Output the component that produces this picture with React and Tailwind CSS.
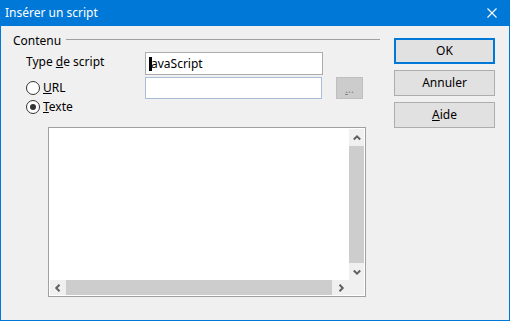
import * as React from "react";

function Radio({ checked }) {
  return (
    <span className="w-[14px] h-[14px] rounded-full border border-[#333333] bg-white flex items-center justify-center shrink-0">
      {checked && <span className="w-[6px] h-[6px] rounded-full bg-[#333333]" />}
    </span>
  );
}

function Chevron({ dir }) {
  const paths = {
    up: "M0.8 5.5 L4 2.3 L7.2 5.5",
    down: "M0.8 2.5 L4 5.7 L7.2 2.5",
    left: "M5.5 0.8 L2.3 4 L5.5 7.2",
    right: "M2.5 0.8 L5.7 4 L2.5 7.2",
  };
  return (
    <svg width="8" height="8" viewBox="0 0 8 8">
      <path d={paths[dir]} fill="none" stroke="#606060" strokeWidth="2" />
    </svg>
  );
}

export default function App() {
  return (
    <div
      className="w-[510px] h-[321px] flex flex-col bg-[#f0f0f0] border-x border-b border-[#0078d7] text-black text-[12px]"
      style={{ fontFamily: '"Noto Sans", "Liberation Sans", sans-serif' }}
    >
      {/* title bar */}
      <div className="h-[26px] -mx-px bg-[#0078d7] flex items-center justify-between pl-[5px] pr-[13px] shrink-0">
        <span className="text-white text-[12px] leading-[16px]">Insérer un script</span>
        <svg width="10" height="10" viewBox="0 0 10 10">
          <path d="M0.5 0.5 L9.5 9.5 M9.5 0.5 L0.5 9.5" stroke="white" strokeWidth="1.1" />
        </svg>
      </div>

      <div className="flex flex-1">
        {/* left column */}
        <div className="w-[379px] pl-[12px] flex flex-col">
          <div className="h-[16px] mt-[7px] flex items-start">
            <span className="leading-[16px]">Contenu</span>
            <div className="flex-1 h-px bg-[#a0a0a0] mt-[6px] ml-[5px]" />
          </div>

          <div className="pl-[13px] flex flex-col">
            <div className="flex items-start mt-[3px] h-[23px]">
              <span className="w-[119px] leading-[16px] mt-[2px]">
                Type <span className="underline">d</span>e script
              </span>
              <div className="w-[178px] h-[23px] bg-white border border-[#acacac] flex items-center pl-[3px]">
                <span className="w-[3px] h-[14px] bg-black" />
                <span className="leading-[16px] -ml-[1px]">avaScript</span>
              </div>
            </div>

            <div className="flex items-center mt-[2px] h-[22px]">
              <div className="w-[119px] flex items-center gap-[3px]">
                <Radio />
                <span className="leading-[16px]">
                  <span className="underline">U</span>RL
                </span>
              </div>
              <div className="w-[177px] h-[22px] bg-white border border-[#abbdd6]" />
              <div className="ml-[14px] w-[27px] h-[22px] bg-[#cccccc] border border-[#bfbfbf] flex items-center justify-center text-[#838383] text-[11px] leading-none">
                <span className="underline">.</span>..
              </div>
            </div>

            <div className="flex items-center h-[16px] gap-[3px]">
              <Radio checked />
              <span className="leading-[16px]">
                <span className="underline">T</span>exte
              </span>
            </div>
          </div>

          {/* text area */}
          <div className="ml-[35px] mt-[12px] w-[318px] h-[170px] border border-[#a0a0a0] bg-white p-px flex flex-col">
            <div className="flex flex-1">
              <div className="flex-1" />
              <div className="w-[15px] bg-[#f0f0f0] flex flex-col">
                <div className="h-[17px] flex items-center justify-center">
                  <Chevron dir="up" />
                </div>
                <div className="flex-1 bg-[#cdcdcd]" />
                <div className="h-[17px] flex items-center justify-center">
                  <Chevron dir="down" />
                </div>
              </div>
            </div>
            <div className="flex h-[15px]">
              <div className="flex-1 bg-[#f0f0f0] flex">
                <div className="w-[16px] flex items-center justify-center">
                  <Chevron dir="left" />
                </div>
                <div className="flex-1 bg-[#cdcdcd]" />
                <div className="w-[17px] flex items-center justify-center">
                  <Chevron dir="right" />
                </div>
              </div>
              <div className="w-[15px] bg-[#f0f0f0]" />
            </div>
          </div>
        </div>

        {/* right column */}
        <div className="ml-[14px] pt-[12px] w-[101px] flex flex-col gap-[6px]">
          <button className="h-[26px] bg-[#e1e1e1] border-2 border-[#0078d7] leading-[16px]">OK</button>
          <button className="h-[26px] bg-[#e1e1e1] border border-[#adadad] leading-[16px]">Annuler</button>
          <button className="h-[26px] bg-[#e1e1e1] border border-[#adadad] leading-[16px]">
            <span className="underline">A</span>ide
          </button>
        </div>
      </div>
    </div>
  );
}
